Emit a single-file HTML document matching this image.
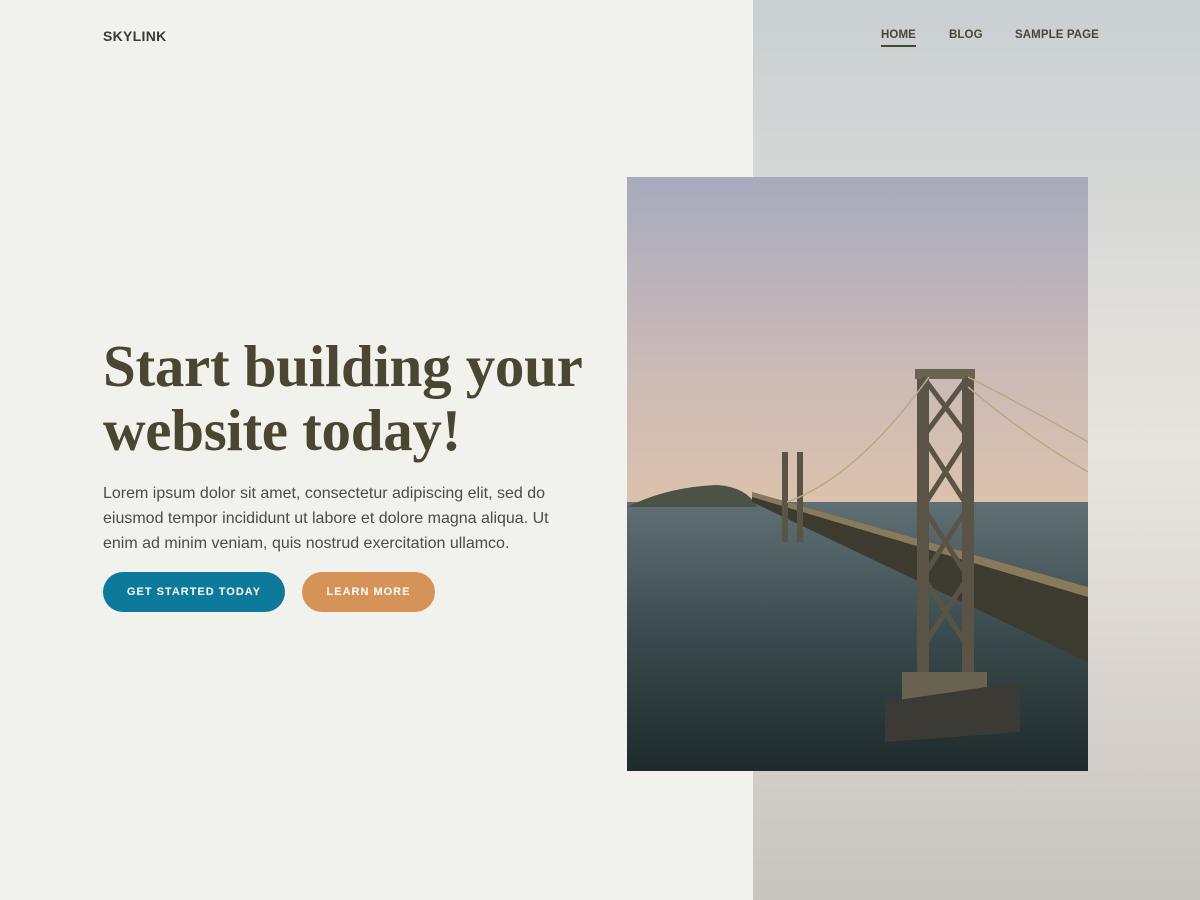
<!DOCTYPE html>
<html><head><meta charset="utf-8"><style>
*{margin:0;padding:0;box-sizing:border-box}
body{width:1200px;height:900px;position:relative;overflow:hidden;background:#f1f1ee;font-family:"Liberation Sans",sans-serif}
.right{position:absolute;left:753px;top:0;width:447px;height:900px;background:linear-gradient(180deg,#c9cfd2 0%,#dcdcd8 30%,#e8e4de 50%,#ddd8d2 70%,#d2cdc8 85%,#c8c4c0 100%)}
.logo{position:absolute;left:103px;top:28px;font-weight:bold;font-size:14px;letter-spacing:0.3px;color:#3b3b36}
.nav{position:absolute;top:29px;font-size:11.5px;font-weight:bold;color:#4a4630;letter-spacing:0.1px}
h1{position:absolute;left:103px;top:334px;font-family:"Liberation Serif",serif;font-weight:bold;font-size:59px;line-height:64px;color:#4a4630;letter-spacing:-0.3px}
p{position:absolute;left:103px;top:481px;width:482px;font-size:16px;line-height:25px;color:#4b4b47}
.btn{position:absolute;top:572px;height:40px;border-radius:20px;color:#fff;font-size:11px;font-weight:bold;letter-spacing:1px;display:flex;align-items:center;justify-content:center}
.photo{position:absolute;left:627px;top:177px;width:461px;height:594px;overflow:hidden}
</style></head><body>
<div class="right"></div>
<div class="logo">SKYLINK</div>
<div class="nav" style="left:881px">HOME</div>
<div style="position:absolute;left:881px;top:45px;width:35px;height:2px;background:#4a4630"></div>
<div class="nav" style="left:949px">BLOG</div>
<div class="nav" style="left:1015px">SAMPLE PAGE</div>
<h1>Start building your<br>website today!</h1>
<p>Lorem ipsum dolor sit amet, consectetur adipiscing elit, sed do eiusmod tempor incididunt ut labore et dolore magna aliqua. Ut enim ad minim veniam, quis nostrud exercitation ullamco.</p>
<div class="btn" style="left:103px;width:182px;background:#0e7a9b">GET STARTED TODAY</div>
<div class="btn" style="left:302px;width:133px;background:#d59358">LEARN MORE</div>
<div class="photo">
<svg width="461" height="594" viewBox="0 0 461 594">
<defs>
<linearGradient id="sky" x1="0" y1="0" x2="0" y2="1"><stop offset="0" stop-color="#a6abbd"/><stop offset="0.5" stop-color="#c7b8b8"/><stop offset="1" stop-color="#dcc2ad"/></linearGradient>
<linearGradient id="sea" x1="0" y1="0" x2="0" y2="1"><stop offset="0" stop-color="#5f6f74"/><stop offset="0.5" stop-color="#3a4a4c"/><stop offset="1" stop-color="#1e2a2b"/></linearGradient>
</defs>
<rect width="461" height="330" fill="url(#sky)"/>
<rect y="325" width="461" height="269" fill="url(#sea)"/>
<path d="M0 330 Q40 310 90 308 Q120 310 130 330 Z" fill="#4c5244"/>
<path d="M125 315 L461 410 L461 485 L125 325 Z" fill="#3d3a30"/>
<path d="M125 315 L461 410 L461 420 L125 320 Z" fill="#8a7a5c"/>
<rect x="290" y="195" width="12" height="310" fill="#5a5446"/>
<rect x="335" y="195" width="12" height="310" fill="#5a5446"/>
<rect x="288" y="192" width="60" height="10" fill="#6b6350"/>
<path d="M296 200 L341 260 M341 200 L296 260 M296 260 L341 330 M341 260 L296 330 M296 330 L341 400 M341 330 L296 400 M296 400 L341 470 M341 400 L296 470" stroke="#5a5446" stroke-width="5"/>
<rect x="275" y="495" width="85" height="30" fill="#6a6250"/>
<path d="M258 525 L393 505 L393 555 L258 565 Z" fill="#3c3a34"/>
<rect x="155" y="275" width="6" height="90" fill="#5a5446"/><rect x="170" y="275" width="6" height="90" fill="#5a5446"/>
<path d="M302 200 Q230 300 160 325 M341 200 Q400 230 461 265 M341 210 Q400 260 461 295" stroke="#b9a883" stroke-width="1.5" fill="none"/>
</svg>
</div>
</body></html>
